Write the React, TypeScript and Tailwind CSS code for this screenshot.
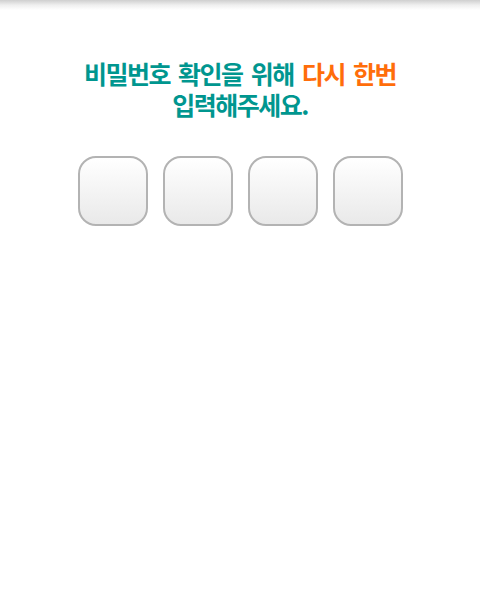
export default function App() {
  return (
    <div className="relative w-[480px] h-[602px] bg-white overflow-hidden" style={{ fontFamily: '"Noto Sans CJK KR", "Noto Sans", sans-serif' }}>
      <div className="absolute top-0 left-0 right-0 h-[10px] bg-gradient-to-b from-[#cfcfcf] via-[#efefef] to-white" />
      <div className="pt-[58px] flex flex-col items-center">
        <div className="flex flex-col items-center font-bold text-[25px] leading-[31px] tracking-[-1.5px] [word-spacing:4px] text-[#00968f]">
          <p className="whitespace-pre">비밀번호 확인을 위해 <span className="text-[#ff6d0a]">다시 한번</span></p>
          <p>입력해주세요.</p>
        </div>
        <div className="mt-[36px] flex gap-[15px]">
          {[0, 1, 2, 3].map((i) => (
            <div key={i} className="w-[70px] h-[70px] rounded-[18px] border-2 border-[#b3b3b3] bg-gradient-to-b from-white to-[#e9e9e9]" />
          ))}
        </div>
      </div>
    </div>
  );
}
